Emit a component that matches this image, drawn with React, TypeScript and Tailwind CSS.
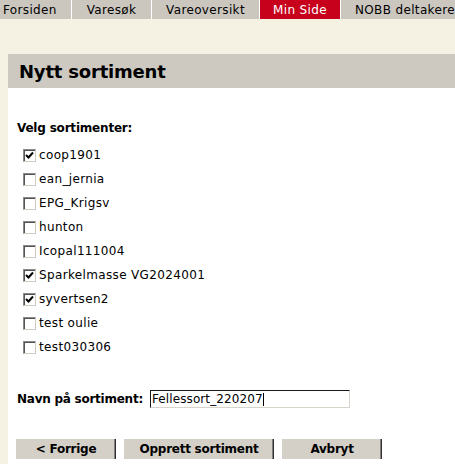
import React from "react";

const tabs = [
  { label: "Forsiden", w: "w-[72px]", align: "justify-start pl-[3px]" },
  { label: "Varesøk", w: "w-[80px]", align: "justify-center" },
  { label: "Vareoversikt", w: "w-[108px]", align: "justify-center" },
  { label: "Min Side", w: "w-[81px]", align: "justify-center", active: true },
];

const items = [
  { name: "coop1901", checked: true },
  { name: "ean_jernia", checked: false },
  { name: "EPG_Krigsv", checked: false },
  { name: "hunton", checked: false },
  { name: "Icopal111004", checked: false },
  { name: "Sparkelmasse VG2024001", checked: true },
  { name: "syvertsen2", checked: true },
  { name: "test oulie", checked: false },
  { name: "test030306", checked: false },
];

function Box({ checked }: { checked: boolean }) {
  return (
    <span className="w-[13px] h-[13px] shrink-0 bg-white border border-t-[#8a8a8a] border-l-[#8a8a8a] border-b-[#d0ccc4] border-r-[#d0ccc4] shadow-[inset_1px_1px_0_#555] flex items-center justify-center">
      {checked && (
        <svg width="9" height="9" viewBox="0 0 9 9">
          <path d="M1 4 L3.5 6.5 L8 1.5" stroke="#000" strokeWidth="2" fill="none" />
        </svg>
      )}
    </span>
  );
}

const btn =
  "h-[20px] bg-[#d4d0c8] font-bold tracking-[-0.25px] shadow-[inset_-1px_0_#303030,inset_-2px_0_#808080]";

export default function App() {
  return (
    <div className="w-[455px] h-[464px] overflow-hidden bg-[#f6f2e3] text-black text-[12px] tracking-[0.35px] font-['Verdana','DejaVu_Sans',sans-serif]">
      <div className="flex h-[19px] bg-[#cbc7bf] whitespace-nowrap">
        {tabs.map((t) => (
          <div
            key={t.label}
            className={`${t.w} ${t.align} flex items-center border-r border-white ${
              t.active ? "bg-[#c7001b] text-white" : ""
            }`}
          >
            {t.label}
          </div>
        ))}
        <div className="flex-1 flex items-center pl-[14px]">NOBB deltakere</div>
      </div>

      <div className="pl-[8px] pt-[35px]">
        <div className="h-[34px] bg-[#cdc9c1] flex items-center pl-[11px] text-[18px] font-bold tracking-[-0.2px]">
          Nytt sortiment
        </div>
        <div className="bg-white h-[400px] pl-[9px] pt-[32px]">
          <div className="font-bold leading-[16px] tracking-[-0.2px]">Velg sortimenter:</div>
          <div className="mt-[7px] flex flex-col">
            {items.map((it) => (
              <div key={it.name} className="h-[24px] flex items-center gap-[3px] pl-[6px]">
                <Box checked={it.checked} />
                <span>{it.name}</span>
              </div>
            ))}
          </div>
          <div className="mt-[31px] flex items-center h-[18px]">
            <span className="font-bold w-[133px] tracking-[-0.25px]">Navn på sortiment:</span>
            <div className="w-[200px] h-[18px] border border-t-[#1a1a1a] border-l-[#1a1a1a] border-b-[#d8d4cc] border-r-[#d8d4cc] flex items-center pl-[1px] tracking-[0.1px]">
              <span>Fellessort_220207</span>
              <span className="w-px h-[13px] bg-black" />
            </div>
          </div>
          <div className="mt-[31px] flex gap-[8px] -ml-px">
            <button className={`w-[100px] ${btn}`}>&lt; Forrige</button>
            <button className={`w-[150px] ${btn}`}>Opprett sortiment</button>
            <button className={`w-[100px] ${btn}`}>Avbryt</button>
          </div>
        </div>
      </div>
    </div>
  );
}
